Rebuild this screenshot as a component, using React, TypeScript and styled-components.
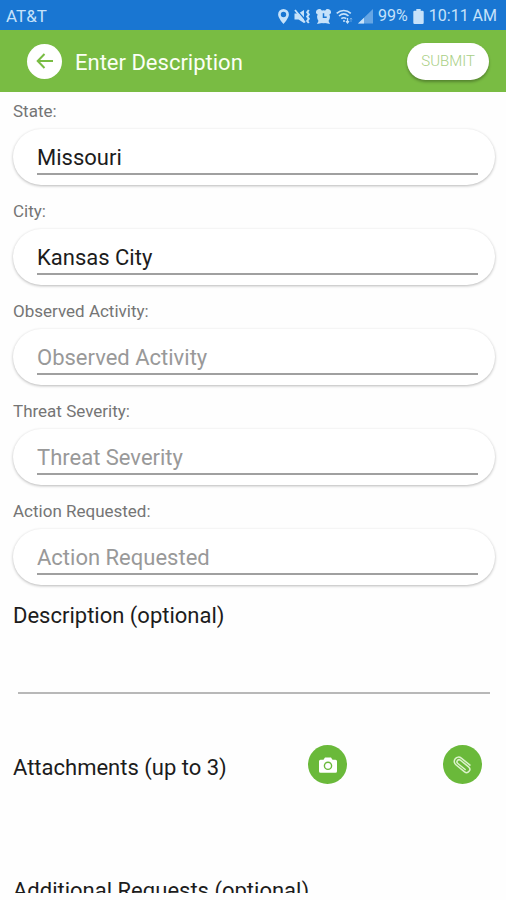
import React from "react";
import styled, { createGlobalStyle } from "styled-components";

const GlobalStyle = createGlobalStyle`
  * { box-sizing: border-box; }
  body {
    margin: 0;
    background: #fefefe;
    font-family: Roboto, "Liberation Sans", sans-serif;
  }
  button, input, textarea { font-family: inherit; }
`;

const Screen = styled.div`
  display: flex;
  flex-direction: column;
  height: 100vh;
  padding-bottom: 7px;
  overflow: hidden;
`;

const StatusBar = styled.div`
  display: flex;
  align-items: center;
  justify-content: space-between;
  flex: none;
  height: 30px;
  padding: 2px 9px 0 6px;
  background: #1976d2;
  color: #c6e2fa;
  font-size: 17px;
  line-height: 20px;
`;

const StatusIcons = styled.div`
  display: flex;
  align-items: center;
  gap: 5px;
  font-size: 16px;

  svg { display: block; flex: none; }
`;

const Header = styled.header`
  display: flex;
  align-items: center;
  flex: none;
  height: 62px;
  padding: 0 17px 0 27px;
  background: #79bc43;
`;

const RoundButton = styled.button<{ $size: number; $filled?: boolean }>`
  display: flex;
  align-items: center;
  justify-content: center;
  flex: none;
  width: ${(p) => p.$size}px;
  height: ${(p) => p.$size}px;
  padding: 0;
  border: 0;
  border-radius: 50%;
  background: ${(p) => (p.$filled ? "#6ab93a" : "#fff")};
  color: ${(p) => (p.$filled ? "#fff" : "#79bc43")};
`;

const Title = styled.h1`
  flex: 1;
  margin: 0 0 0 13px;
  padding-top: 3px;
  color: #fbfff5;
  font-size: 22px;
  font-weight: 400;
  line-height: 28px;
`;

const SubmitButton = styled.button`
  height: 37px;
  padding: 0 14px;
  border: 0;
  border-radius: 19px;
  background: #fff;
  box-shadow: 0 2px 3px rgba(0, 0, 0, 0.3);
  color: #a9cf85;
  font-size: 15px;
  font-weight: 300;
`;

const Form = styled.form`
  flex: 1;
  min-height: 0;
  padding: 9px 11px 0 13px;
  overflow: hidden;
`;

const Field = styled.div`
  margin-bottom: 16px;
`;

const FieldLabel = styled.label`
  display: block;
  margin-bottom: 8px;
  color: #757575;
  font-size: 17px;
  line-height: 20px;
`;

const Pill = styled.div`
  height: 56px;
  padding: 10px 17px 0 24px;
  border-radius: 28px;
  background: #fff;
  box-shadow: 0 1px 3px rgba(0, 0, 0, 0.28);
`;

const TextInput = styled.input`
  display: block;
  width: 100%;
  height: 36px;
  padding: 3px 0 0;
  border: 0;
  border-bottom: 2px solid #a0a0a0;
  border-radius: 0;
  outline: 0;
  background: transparent;
  color: #1c1c1c;
  font-size: 22px;

  &::placeholder { color: #999; opacity: 1; }
`;

const SectionTitle = styled.label`
  display: block;
  color: #1c1c1c;
  font-size: 22px;
  line-height: 30px;
`;

const DescriptionInput = styled.textarea`
  display: block;
  width: calc(100% - 10px);
  height: 63px;
  margin: 0 5px;
  padding: 8px 0;
  border: 0;
  border-bottom: 2px solid #b8b8b8;
  outline: 0;
  resize: none;
  background: transparent;
  font-size: 22px;
`;

const Attachments = styled.div`
  display: flex;
  align-items: center;
  justify-content: space-between;
  margin: 51px 0 92px;
  padding-right: 13px;

  > ${SectionTitle} { padding-top: 6px; }
`;

const AttachmentButtons = styled.div`
  display: flex;
  gap: 96px;
`;

const fields = [
  { id: "state", label: "State", value: "Missouri" },
  { id: "city", label: "City", value: "Kansas City" },
  { id: "activity", label: "Observed Activity" },
  { id: "severity", label: "Threat Severity" },
  { id: "action", label: "Action Requested" },
];

const PinIcon = () => (
  <svg width="11" height="15" viewBox="0 0 11 15" fill="currentColor" fillRule="evenodd">
    <path d="M5.500 0A5.400 5.400 0 0 0 .1 5.400C.1 9 5.500 15 5.500 15S10.900 9 10.900 5.400A5.400 5.400 0 0 0 5.500 0Zm0 2.800a2.700 2.700 0 1 1 0 5.400 2.700 2.700 0 0 1 0-5.400Z" />
  </svg>
);

const MuteVibrateIcon = () => (
  <svg width="17" height="15" viewBox="0 0 17 15" fill="currentColor">
    <path d="M.5 4.500h4L10 1v13L4.500 10.500h-4Z" />
    <path d="M2.200.5 11.500 11" stroke="#1976d2" strokeWidth="1.200" />
    <path d="M1 1 11 13.500" stroke="currentColor" strokeWidth="1.800" />
    <path d="m14.800 1-1.600 2.200 1.600 2.200-1.600 2.200 1.600 2.200-1.600 2.200 1.600 2" fill="none" stroke="currentColor" strokeWidth="2" />
  </svg>
);

const AlarmIcon = () => (
  <svg width="15" height="15" viewBox="0 0 15 15" fill="currentColor">
    <circle cx="7.500" cy="7.800" r="6.500" />
    <path d="M0 4.200A3.500 3.500 0 0 1 4.800.3L6 2 2 5.500ZM15 4.200A3.500 3.500 0 0 0 10.200.3L9 2l4 3.500ZM1 15l2-4 3 3ZM14 15l-2-4-3 3Z" />
    <path d="M7.500 4.200V8.300h3.200" fill="none" stroke="#1976d2" strokeWidth="1.500" />
  </svg>
);

const WifiIcon = () => (
  <svg width="17" height="15" viewBox="0 0 17 15" fill="none" stroke="currentColor" strokeWidth="1.600">
    <path d="M.7 4.300C4.800.5 10.700.5 14.800 4.300M3 7c3-2.600 6.500-2.600 9.500 0M5.300 9.700c1.600-1.300 3.300-1.300 4.900 0" />
    <circle cx="8" cy="12" r="1" fill="currentColor" stroke="none" />
    <path d="M11.500 9v5M10 12.200l1.500 1.800 1.500-1.800" strokeWidth="1.300" />
    <path d="M15 13V9M13.900 10.500 15 9l1.100 1.500" strokeWidth="1" opacity=".4" />
  </svg>
);

const SignalIcon = () => (
  <svg width="15" height="15" viewBox="0 0 15 15" fill="currentColor">
    <path d="M0 14.500 15 0v14.500Z" opacity=".45" />
    <path d="M0 14.500 6 8.700v5.800Z" />
  </svg>
);

const BatteryIcon = () => (
  <svg width="11" height="15" viewBox="0 0 11 15" fill="currentColor">
    <path d="M3.300 0h4.400v1.800H9.500a1.200 1.200 0 0 1 1.200 1.200v10.800A1.200 1.200 0 0 1 9.500 15h-8A1.200 1.200 0 0 1 .3 13.800V3a1.200 1.200 0 0 1 1.200-1.200h1.800Z" />
  </svg>
);

const BackIcon = () => (
  <svg width="18" height="16" viewBox="0 0 18 16" fill="none" stroke="currentColor" strokeWidth="2">
    <path d="M17 8H2M8.500 1 1.700 8l6.800 7" />
  </svg>
);

const CameraIcon = () => (
  <svg width="18" height="16" viewBox="0 0 18 16" fill="currentColor">
    <path d="M6 .5h6l1.500 2.200h3A1.500 1.500 0 0 1 18 4.200v10a1.500 1.500 0 0 1-1.500 1.500h-15A1.500 1.500 0 0 1 0 14.200v-10a1.500 1.500 0 0 1 1.500-1.500h3Z" />
    <circle cx="9" cy="8.800" r="3.600" fill="none" stroke="#6ab93a" strokeWidth="1.400" />
  </svg>
);

const ClipIcon = () => (
  <svg width="20" height="18" viewBox="0 0 20 18" fill="none" stroke="#dcf2cc" strokeWidth="1.500" strokeLinecap="round">
    <g transform="rotate(39 10 9)">
      <path d="M15.500 4.700H4.300a4.300 4.300 0 0 0 0 8.600h11.200a3.200 3.200 0 0 0 0-6.400H5a2.100 2.100 0 0 0 0 4.200h9.500" />
    </g>
  </svg>
);

export default function App() {
  return (
    <>
      <GlobalStyle />
      <Screen>
        <StatusBar>
          <span>AT&amp;T</span>
          <StatusIcons>
            <PinIcon />
            <MuteVibrateIcon />
            <AlarmIcon />
            <WifiIcon />
            <SignalIcon />
            <span>99%</span>
            <BatteryIcon />
            <span>10:11 AM</span>
          </StatusIcons>
        </StatusBar>
        <Header>
          <RoundButton type="button" $size={35} aria-label="Back">
            <BackIcon />
          </RoundButton>
          <Title>Enter Description</Title>
          <SubmitButton type="submit" form="report">SUBMIT</SubmitButton>
        </Header>
        <Form id="report" onSubmit={(e) => e.preventDefault()}>
          {fields.map((f) => (
            <Field key={f.id}>
              <FieldLabel htmlFor={f.id}>{f.label}:</FieldLabel>
              <Pill>
                <TextInput id={f.id} type="text" defaultValue={f.value} placeholder={f.label} />
              </Pill>
            </Field>
          ))}
          <SectionTitle htmlFor="description">Description (optional)</SectionTitle>
          <DescriptionInput id="description" />
          <Attachments role="group" aria-labelledby="attachments">
            <SectionTitle as="span" id="attachments">Attachments (up to 3)</SectionTitle>
            <AttachmentButtons>
              <RoundButton type="button" $size={39} $filled aria-label="Take photo">
                <CameraIcon />
              </RoundButton>
              <RoundButton type="button" $size={39} $filled aria-label="Attach file">
                <ClipIcon />
              </RoundButton>
            </AttachmentButtons>
          </Attachments>
          <SectionTitle as="span">Additional Requests (optional)</SectionTitle>
        </Form>
      </Screen>
    </>
  );
}
